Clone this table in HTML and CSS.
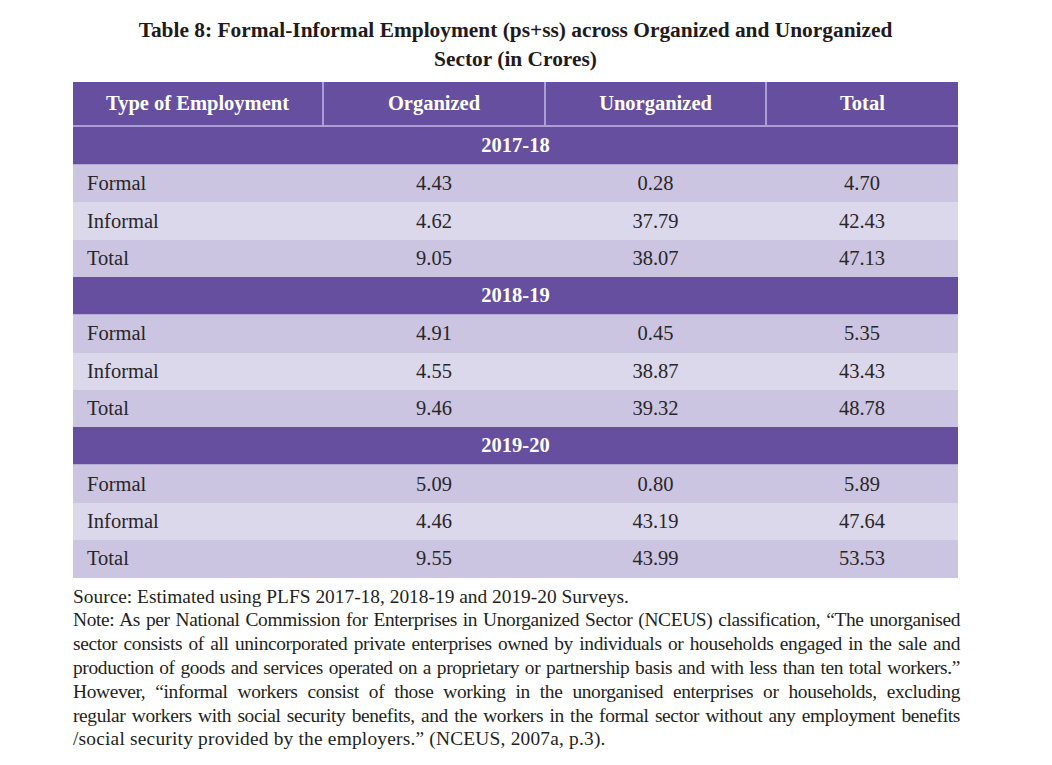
FILE: index.html
```html
<!DOCTYPE html>
<html>
<head>
<meta charset="utf-8">
<link rel="stylesheet" href="styles.css">
</head>
<body>
<div class="page">
  <h1 class="title">Table 8: Formal-Informal Employment (ps+ss) across Organized and Unorganized<br>Sector (in Crores)</h1>
  <table class="data">
    <colgroup>
      <col class="c1"><col class="c2"><col class="c3"><col class="c4">
    </colgroup>
    <thead>
      <tr class="head">
        <th>Type of Employment</th><th>Organized</th><th>Unorganized</th><th>Total</th>
      </tr>
    </thead>
    <tbody>
      <tr class="year"><td colspan="4">2017-18</td></tr>
      <tr class="odd"><td class="lbl">Formal</td><td>4.43</td><td>0.28</td><td>4.70</td></tr>
      <tr class="even"><td class="lbl">Informal</td><td>4.62</td><td>37.79</td><td>42.43</td></tr>
      <tr class="odd"><td class="lbl">Total</td><td>9.05</td><td>38.07</td><td>47.13</td></tr>
      <tr class="year"><td colspan="4">2018-19</td></tr>
      <tr class="odd"><td class="lbl">Formal</td><td>4.91</td><td>0.45</td><td>5.35</td></tr>
      <tr class="even"><td class="lbl">Informal</td><td>4.55</td><td>38.87</td><td>43.43</td></tr>
      <tr class="odd"><td class="lbl">Total</td><td>9.46</td><td>39.32</td><td>48.78</td></tr>
      <tr class="year"><td colspan="4">2019-20</td></tr>
      <tr class="odd"><td class="lbl">Formal</td><td>5.09</td><td>0.80</td><td>5.89</td></tr>
      <tr class="even"><td class="lbl">Informal</td><td>4.46</td><td>43.19</td><td>47.64</td></tr>
      <tr class="odd"><td class="lbl">Total</td><td>9.55</td><td>43.99</td><td>53.53</td></tr>
    </tbody>
  </table>
  <div class="notes">
    <p class="src">Source: Estimated using PLFS 2017-18, 2018-19 and 2019-20 Surveys.</p>
    <p class="just">Note: As per National Commission for Enterprises in Unorganized Sector (NCEUS) classification, “The unorganised</p>
    <p class="just">sector consists of all unincorporated private enterprises owned by individuals or households engaged in the sale and</p>
    <p class="just">production of goods and services operated on a proprietary or partnership basis and with less than ten total workers.”</p>
    <p class="just">However, “informal workers consist of those working in the unorganised enterprises or households, excluding</p>
    <p class="just">regular workers with social security benefits, and the workers in the formal sector without any employment benefits</p>
    <p class="last">/social security provided by the employers.” (NCEUS, 2007a, p.3).</p>
  </div>
</div>
</body>
</html>
```
FILE: styles.css
```css
html, body {
  margin: 0;
  padding: 0;
  background: #ffffff;
}
body {
  font-family: "Liberation Serif", "Times New Roman", "DejaVu Serif", serif;
  color: #231f20;
}
.page {
  width: 885px;
  margin-left: 73px;
  padding-top: 16px;
}
.title {
  margin: 0 0 8px 0;
  font-family: "Liberation Serif", "Times New Roman", serif;
  font-size: 21.4px;
  line-height: 29px;
  font-weight: bold;
  text-align: center;
  color: #1f1a1c;
}
.data {
  width: 885px;
  border-collapse: collapse;
  table-layout: fixed;
  font-family: "Liberation Serif", "Times New Roman", serif;
  font-size: 20.5px;
}
.c1 { width: 250px; }
.c2 { width: 222px; }
.c3 { width: 221px; }
.c4 { width: 192px; }
.head th {
  height: 43px;
  padding: 0;
  background: #654f9e;
  color: #ffffff;
  font-weight: bold;
  text-align: center;
  border-left: 2px solid #ab9dd5;
  border-bottom: 2px solid #ab9dd5;
}
.head th:first-child { border-left: none; }
.year td {
  height: 37px;
  padding: 0;
  background: #654f9e;
  color: #ffffff;
  font-weight: bold;
  text-align: center;
  border-bottom: 1px solid #b5aad8;
}
.data tr.odd td,
.data tr.even td {
  height: 37.4px;
  padding: 0;
  text-align: center;
  color: #2a2526;
}
.data tr.odd td { background: #cbc5e1; }
.data tr.even td { background: #dcd8ec; }
.data tr.odd td.lbl,
.data tr.even td.lbl {
  text-align: left;
  padding-left: 14px;
}
.notes {
  margin-top: 7px;
  width: 887px;
  font-family: "Liberation Serif", "Times New Roman", serif;
  font-size: 19.4px;
  line-height: 23.8px;
  color: #231f20;
}
.notes p {
  margin: 0;
  white-space: nowrap;
}
.notes p.just {
  letter-spacing: -0.35px;
  text-align: justify;
  text-align-last: justify;
}
.notes p.last {
  letter-spacing: 0.2px;
}
```
